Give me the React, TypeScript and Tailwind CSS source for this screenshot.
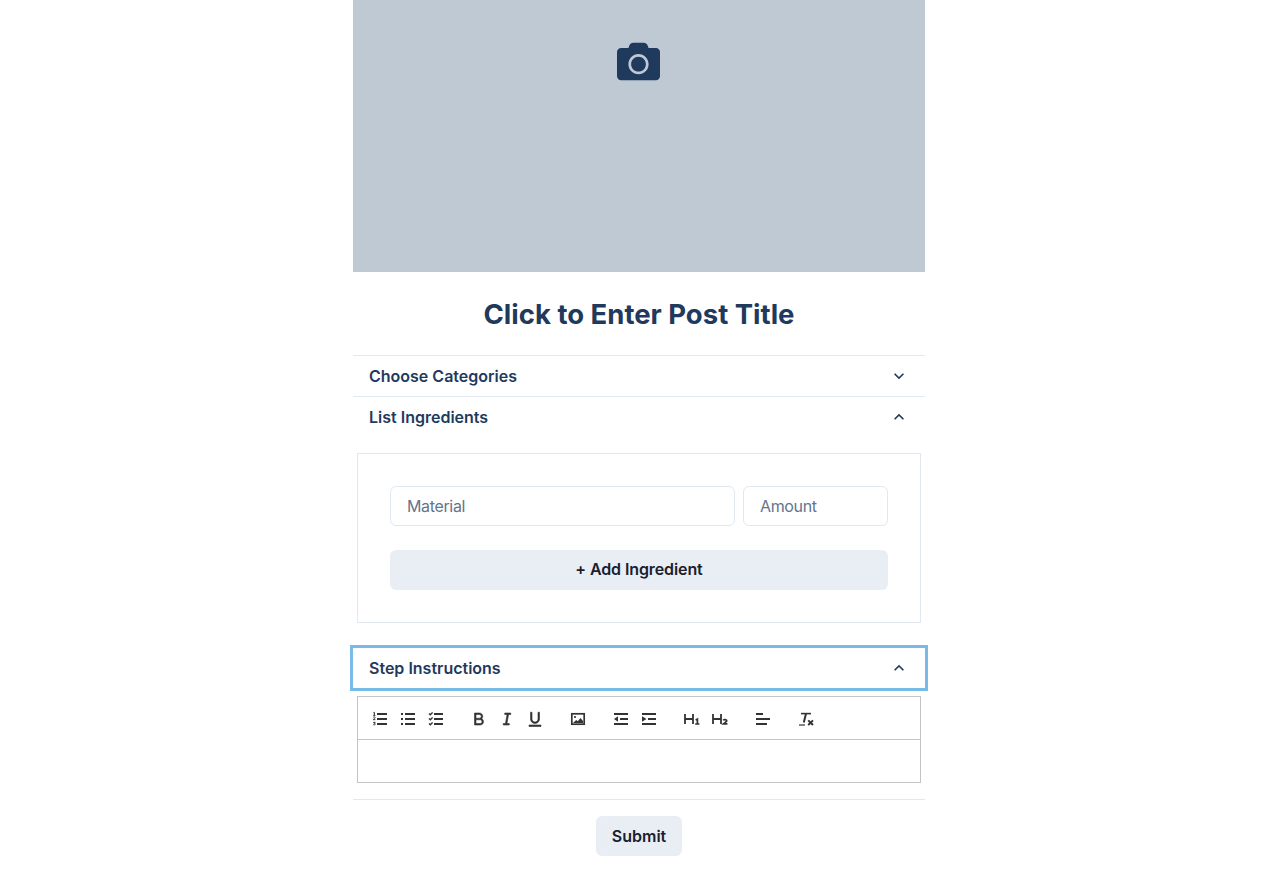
import React from "react";
import { FaCamera } from "react-icons/fa";
import { RiBold, RiItalic, RiUnderline } from "react-icons/ri";

function Svg({ children }: { children: React.ReactNode }) {
  return (
    <svg viewBox="0 0 18 18" className="h-[18px] w-[18px]" fill="currentColor" stroke="none">
      {children}
    </svg>
  );
}

const Bars3 = ({ x }: { x: number }) => (
  <>
    <rect x={x} y={3} width={16 - x} height={2} />
    <rect x={x} y={8} width={16 - x} height={2} />
    <rect x={x} y={13} width={16 - x} height={2} />
  </>
);

const Ordered = () => (
  <Svg>
    <Bars3 x={6} />
    <g fill="none" stroke="currentColor" strokeWidth={1}>
      <path d="M2.4 2.8l1-.5v3M2.2 5.4h2.2" />
      <path d="M2.2 7.4c.4-.7 2-.6 2 .3 0 .7-1.4 1.2-2 2h2.2" />
      <path d="M2.2 12.4h2l-1 1c1 0 1.2.4 1.1.9-.2.7-1.6.7-2.1.2" />
    </g>
  </Svg>
);
const Bullets = () => (
  <Svg>
    <Bars3 x={6} />
    <rect x={2} y={3} width={2} height={2} />
    <rect x={2} y={8} width={2} height={2} />
    <rect x={2} y={13} width={2} height={2} />
  </Svg>
);
const Checks = () => (
  <Svg>
    <Bars3 x={7} />
    <g fill="none" stroke="currentColor" strokeWidth={1.4}>
      <path d="M2 3.6l1.3 1.2L5.6 2.6" />
      <path d="M2 8.6l1.3 1.2 2.3-2.2" />
      <path d="M2 13.6l1.3 1.2 2.3-2.2" />
    </g>
  </Svg>
);
const Thick = ({ Icon }: { Icon: React.ComponentType<any> }) => (
  <Icon className="h-[18px] w-[18px]" stroke="currentColor" strokeWidth={0.8} />
);
const Bold = () => <Thick Icon={RiBold} />;
const Italic = () => <Thick Icon={RiItalic} />;
const Underline = () => <Thick Icon={RiUnderline} />;
const Picture = () => (
  <Svg>
    <rect x={2.8} y={3.8} width={12.4} height={10.4} fill="none" stroke="currentColor" strokeWidth={1.7} />
    <circle cx={6} cy={7} r={1.1} />
    <path d="M4 13l3.2-3 1.6 1.3L11.5 8l2.5 3v2z" />
  </Svg>
);
const Outdent = () => (
  <Svg>
    <rect x={2} y={3} width={14} height={2} />
    <rect x={2} y={13} width={14} height={2} />
    <rect x={8} y={8} width={8} height={2} />
    <path d="M2 9l4-2.8v5.6z" />
  </Svg>
);
const Indent = () => (
  <Svg>
    <rect x={2} y={3} width={14} height={2} />
    <rect x={2} y={13} width={14} height={2} />
    <rect x={8} y={8} width={8} height={2} />
    <path d="M6.5 9L2 6.2v5.6z" />
  </Svg>
);
const HBase = () => <path d="M2 4v10M10 4v10M2 9h8" fill="none" stroke="currentColor" strokeWidth={1.8} />;
const H1 = () => (
  <Svg>
    <HBase />
    <path d="M12.6 10l1.8-.9V14M12.2 14h4.2" fill="none" stroke="currentColor" strokeWidth={1.7} />
  </Svg>
);
const H2 = () => (
  <Svg>
    <HBase />
    <path d="M12.3 10.4c.5-1.3 3.5-1.1 3.5.4 0 1-2.1 1.8-3.4 3h4" fill="none" stroke="currentColor" strokeWidth={1.7} />
  </Svg>
);
const Align = () => (
  <Svg>
    <rect x={2} y={3} width={7} height={2} />
    <rect x={2} y={8} width={14} height={2} />
    <rect x={2} y={13} width={11} height={2} />
  </Svg>
);
const Clear = () => (
  <Svg>
    <g fill="none" stroke="currentColor">
      <path d="M4 3.6h10" strokeWidth={1.6} />
      <path d="M9 3.6L6.8 12.6" strokeWidth={2} />
      <path d="M2 15h6" strokeWidth={1.2} />
      <path d="M11.2 10.4l4.8 4.6M16 10.4l-4.8 4.6" strokeWidth={2} />
    </g>
  </Svg>
);

const groups = [
  [Ordered, Bullets, Checks],
  [Bold, Italic, Underline],
  [Picture],
  [Outdent, Indent],
  [H1, H2],
  [Align],
  [Clear],
];

function Chevron({ up }: { up?: boolean }) {
  return (
    <svg viewBox="0 0 24 24" className="h-5 w-5 text-[#1f3a5c]" fill="currentColor">
      <path d={up ? "M12 8l-6 6 1.41 1.41L12 10.83l4.59 4.58L18 14z" : "M16.59 8.59L12 13.17 7.41 8.59 6 10l6 6 6-6z"} />
    </svg>
  );
}

function Row({ label, open, focused }: { label: string; open?: boolean; focused?: boolean }) {
  return (
    <div
      className={
        focused
          ? "flex h-[40px] items-center justify-between px-4 ring-[3px] ring-[#78bbe8]"
          : "flex h-[40px] items-center justify-between px-4"
      }
    >
      <span className="text-base font-semibold text-[#1f3a5c]">{label}</span>
      <Chevron up={open} />
    </div>
  );
}

export default function App() {
  return (
    <div className="min-h-[870px] bg-white font-['Inter',sans-serif]">
      <div className="mx-auto w-[572px]">
        <div className="flex h-[272px] justify-center bg-[#bec9d3] pr-px pt-10">
          <FaCamera className="h-[43px] w-[43px] text-[#1f3a5c]" />
        </div>

        <h1 className="flex h-[83px] items-center justify-center pt-0.5 text-[27.5px] font-bold text-[#1f3a5c]">
          Click to Enter Post Title
        </h1>

        <div className="border-t border-[#e2e8f0]">
          <Row label="Choose Categories" />
        </div>
        <div className="border-t border-[#e2e8f0]">
          <Row label="List Ingredients" open />
          <div className="mx-1 mt-4 border border-[#e2e8f0] px-8 py-8">
            <div className="flex gap-2">
              <div className="flex h-10 w-[345px] items-center rounded-md border border-[#e2e8f0] px-4 text-base tracking-[-0.35px] text-[#64748b]">
                Material
              </div>
              <div className="flex h-10 flex-1 items-center rounded-md border border-[#e2e8f0] px-4 text-base tracking-[-0.35px] text-[#64748b]">
                Amount
              </div>
            </div>
            <button className="mt-6 flex h-10 w-full items-center justify-center rounded-md bg-[#e9eef5] pb-0.5 text-base font-semibold tracking-[-0.1px] text-[#1a202c]">
              + Add Ingredient
            </button>
          </div>
        </div>

        <div className="mt-6 border-t border-transparent">
          <Row label="Step Instructions" open focused />
          <div className="mx-1 mt-2 border border-[#c4c4c4]">
            <div className="flex h-[43px] items-center gap-[15px] border-b border-[#c4c4c4] px-2 pt-0.5">
              {groups.map((g, i) => (
                <div key={i} className="flex">
                  {g.map((Icon, j) => (
                    <span key={j} className="flex h-7 w-7 items-center justify-center text-[#333333]">
                      <Icon />
                    </span>
                  ))}
                </div>
              ))}
            </div>
            <div className="h-[42px]" />
          </div>
          <div className="mt-4 border-t border-[#e2e8f0]" />
        </div>

        <div className="mt-4 flex justify-center">
          <button className="h-10 rounded-md bg-[#e9eef5] px-4 text-base font-semibold text-[#1a202c]">
            Submit
          </button>
        </div>
      </div>
    </div>
  );
}
